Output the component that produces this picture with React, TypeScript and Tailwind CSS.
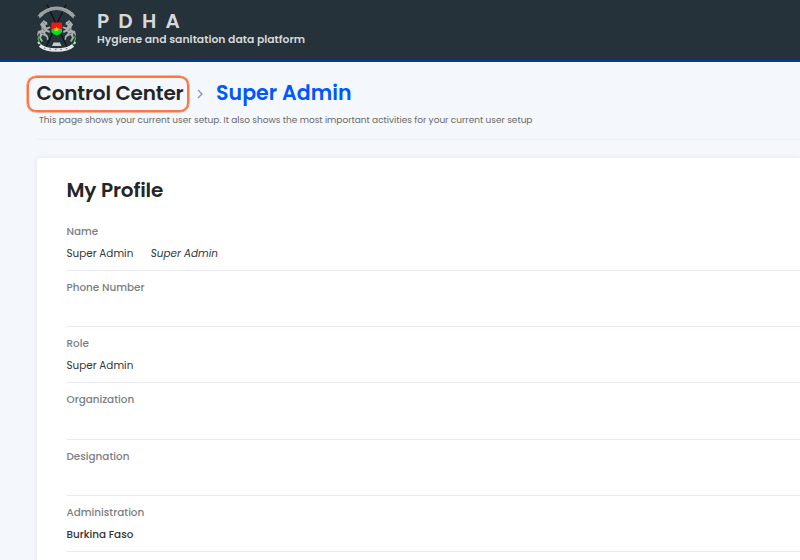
import React from "react";

function Horse({ flip = false }: { flip?: boolean }) {
  return (
    <g transform={flip ? "translate(53 0) scale(-1 1)" : undefined}>
      <path d="M11.500 22.500 L14 20 L15.500 21.500 L17 22 L17.500 24.500 L15.500 25 L16 27.500 L20 26.500 L20.500 28 L17 29.500 L20 31 L19.500 33 L16 31.500 L15 33 L18 36 L18.500 39.500 L17 40 L16.500 37 L12.500 35 L11 37.500 L13 41 L11.500 42 L9 38 L10 34.500 L9 33 L8 36 L7 35 L8 31 L11.500 30 L11.500 27 L10 24.500 Z" fill="#a9adaf" />
      <path d="M13 22 l2 2 M12.500 28 l2 3 M11 33 l3 1" stroke="#5a6367" strokeWidth=".7" />
    </g>
  );
}

function Emblem() {
  return (
    <svg width="54" height="60" viewBox="0 0 54 60" fill="none" className="shrink-0">
      <path d="M17 4.500 L37 47 M36 4.500 L16 47" stroke="#0d1114" strokeWidth="1.200" />
      <path d="M10.500 15 Q13 12.500 17 10.500 Q26.500 6 36 10.500 Q40 12.500 42.500 15" stroke="#9da2a4" strokeWidth="3.600" />
      <path d="M7 16.500 l4 -4.500 2.500 3 -4 3.500 -.5 -2.500 z M46 16.500 l-4 -4.500 -2.500 3 4 3.500 .5 -2.500 z" fill="#9da2a4" />
      <path d="M16 11.500 Q26.500 6.500 37 11.500" stroke="#7c8386" strokeWidth=".7" strokeDasharray="2 1" />
      <Horse />
      <Horse flip />
      <path d="M21.500 22.500h10.500v6.500h-10.500z" fill="#f51616" />
      <path d="M21.500 29h10.500v3q-1 2 -5.250 3.500q-4.250 -1.500 -5.250 -3.500z" fill="#08dc20" />
      <path d="M26.500 26.500l.8 1.800 2 .1-1.500 1.300.5 2-1.800-1.100-1.800 1.100.5-2-1.500-1.300 2-.1z" fill="#fcc116" />
      <path d="M9 36 l-1 3 1 2 q0 2 2 4 M44.500 36 l1 3 -1 2 q0 2 -2 4" stroke="#3fae42" strokeWidth="1.300" />
      <path d="M8 42 l1.500 2 M45.500 42 l-1.500 2" stroke="#cdd0d1" strokeWidth="2" />
      <path d="M23.500 42.500 h6.500 l1.500 3.500 h-9.500z" fill="#c9cccd" />
      <path d="M10 45.500 Q15 50 26.500 50 Q38 50 43 45.500" stroke="#e8e9ea" strokeWidth="3.400" />
      <path d="M14 48 Q26.500 51.500 39 48" stroke="#454b4e" strokeWidth="1" strokeDasharray="1.500 4" />
    </svg>
  );
}

function Row({ label, children }: { label: string; children?: React.ReactNode }) {
  return (
    <div className="h-[56.250px] shrink-0 border-b border-[#e8e9f5] pt-2 text-[10.400px]">
      <div className="h-[22px] leading-[18px] font-medium text-[#7b7e82]">{label}</div>
      <div className="flex leading-[18px] text-[#333538]">{children}</div>
    </div>
  );
}

export default function App() {
  return (
    <div className="flex h-[560px] w-[800px] flex-col overflow-hidden bg-[#f4f7fc] font-['Poppins','Inter',sans-serif] text-[#252525]">
      <header className="flex h-[62px] shrink-0 border-b-2 border-[#093594] bg-[#263239] pl-[30px]">
        <Emblem />
        <div className="ml-[13px] pt-[10px] whitespace-nowrap text-[#d6d8da]">
          <div className="h-[22px] text-[20px] leading-[23px] font-semibold tracking-[9.200px]">PDHA</div>
          <div className="text-[10.800px] leading-[15px] font-semibold tracking-[0.020px]">Hygiene and sanitation data platform</div>
        </div>
      </header>
      <div className="flex h-[78px] shrink-0 flex-col pt-[13px] pl-[27px] whitespace-nowrap">
        <div className="flex h-[37px] shrink-0 items-center">
          <div className="flex h-[36px] w-[161.500px] shrink-0 items-center rounded-[9px] border-2 border-[#ff7543] pb-px pl-[7.500px] shadow-[0_0_0_0.5px_#ff7543]">
            <span className="text-[20px] font-semibold tracking-[-0.170px]">Control Center</span>
          </div>
          <svg width="8" height="10" viewBox="0 0 8 10" fill="none" className="ml-[7px] shrink-0">
            <path d="M2 1l4 4-4 4" stroke="#8d90aa" strokeWidth="1.300" />
          </svg>
          <span className="ml-[12.500px] text-[20.500px] font-semibold tracking-[0.050px] text-[#0057ff]">Super Admin</span>
        </div>
        <p className="pl-3 text-[9px] leading-[17px] tracking-[-0.030px] text-[#6b6b6b]">This page shows your current user setup. It also shows the most important activities for your current user setup</p>
        <div className="mt-auto ml-[10px] h-px shrink-0 bg-[#ebeef4]" />
      </div>
      <main className="mt-[18px] ml-[37px] flex grow flex-col rounded-tl bg-white pl-[29.500px] shadow-[0_0_5px_#dfe4ee]">
        <h2 className="h-[56.500px] shrink-0 pt-[18px] text-[20px] leading-[28px] font-semibold tracking-[-0.150px]">My Profile</h2>
        <Row label="Name"><span>Super Admin</span><em className="ml-[17.500px]">Super Admin</em></Row>
        <Row label="Phone Number" />
        <Row label="Role">Super Admin</Row>
        <Row label="Organization" />
        <Row label="Designation" />
        <Row label="Administration"><span className="font-medium">Burkina Faso</span></Row>
        <Row label="" />
      </main>
    </div>
  );
}
